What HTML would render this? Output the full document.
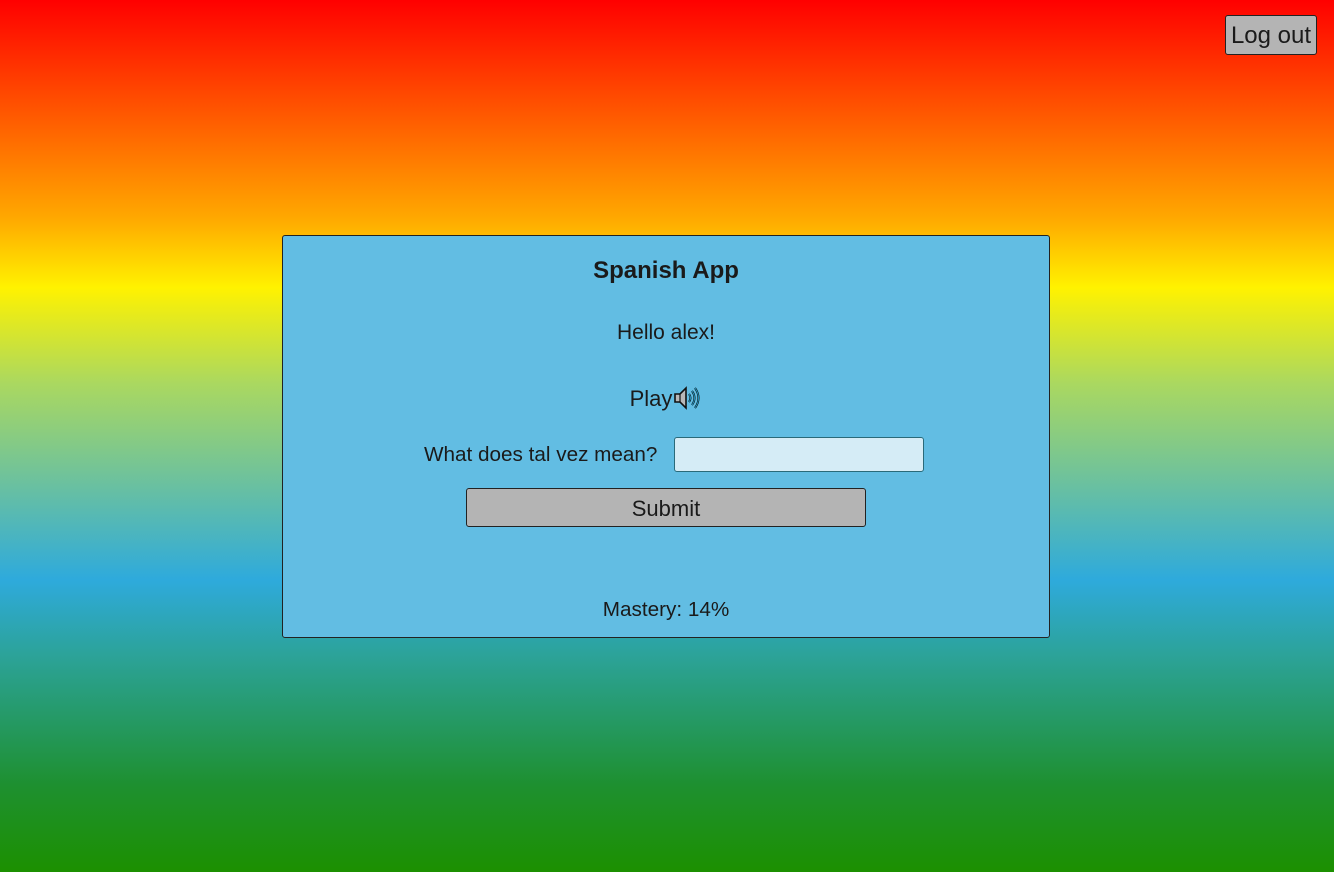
<!DOCTYPE html>
<html><head><meta charset="utf-8"><style>
html,body{margin:0;padding:0;width:1334px;height:872px;overflow:hidden}
body{background:linear-gradient(to bottom,#ff0000 0%,#ffa800 25%,#fff200 33%,#aad860 44%,#2eaadc 66.5%,#2ca39a 75%,#1e9030 90%,#1c9000 100%);font-family:"Liberation Sans",Arial,sans-serif;color:#1a1a1a;position:relative}
.logout{position:absolute;left:1225px;top:15px;width:90px;height:38px;background:#b4b4b4;border:1px solid #222;border-radius:3px;font-size:24px;line-height:40px;text-align:center}
.card{position:absolute;left:282px;top:235px;width:766px;height:401px;background:#62bde3;border:1px solid #222;border-radius:3px}
.t{position:absolute;left:0;width:100%;text-align:center}
.input{position:absolute;left:391px;top:201px;width:248px;height:33px;background:#d5ecf6;border:1px solid #2a6a7a;border-radius:3px}
.btn{position:absolute;left:183px;top:252px;width:398px;height:37px;background:#b4b4b4;border:1px solid #222;border-radius:3px;font-size:22px;line-height:39px;text-align:center}
</style></head><body>
<div class="logout">Log out</div>
<div class="card">
<div class="t" style="top:21px;font-size:24px;font-weight:bold">Spanish App</div>
<div class="t" style="top:85px;font-size:21px">Hello alex!</div>
<div class="t" style="top:149px;font-size:22px;left:0">Play<svg width="30" height="26" viewBox="0 0 28 26" style="vertical-align:-5px"><path d="M2 9h5l6-6v20l-6-6H2z" fill="#b8b8b8" stroke="#111" stroke-width="1.6"/><path d="M7 9v8" stroke="#111" stroke-width="1.2"/><path d="M16 9q3 4 0 8M19 6q5 7 0 14M22 3q7 10 0 20" fill="none" stroke="#111" stroke-width="2"/><path d="M16 9q3 4 0 8M19 6q5 7 0 14M22 3q7 10 0 20" fill="none" stroke="#2ad" stroke-width="0.8"/></svg></div>
<div style="position:absolute;left:141px;top:207px;font-size:20.7px">What does tal vez mean?</div>
<div class="input"></div>
<div class="btn">Submit</div>
<div class="t" style="top:362px;font-size:20.7px">Mastery: 14%</div>
</div>
</body></html>
